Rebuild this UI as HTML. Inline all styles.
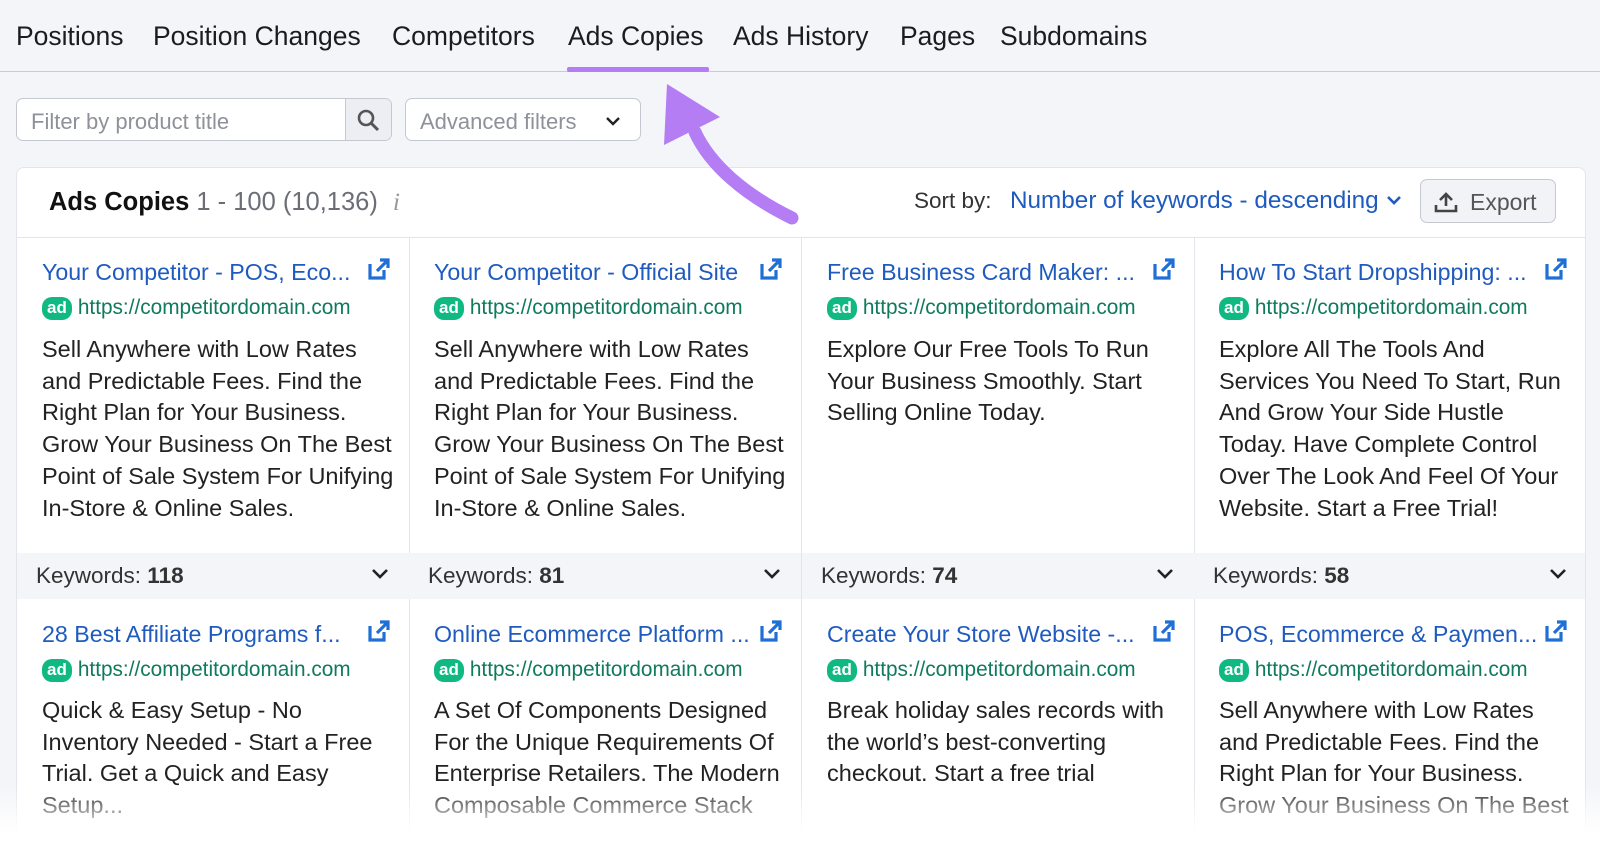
<!DOCTYPE html>
<html><head><meta charset="utf-8"><style>
*{box-sizing:border-box;margin:0;padding:0}
html,body{width:1600px;height:841px;overflow:hidden}
body{background:#f4f5f9;font-family:"Liberation Sans",sans-serif;color:#222;position:relative}
.tabs{position:absolute;top:0;left:0;right:0;height:72px;border-bottom:1px solid #c9cbd2}
.tab{position:absolute;top:21px;font-size:26.5px;color:#1c1c1e}
.ul{position:absolute;left:567px;width:142px;top:67px;height:5px;background:#b57df3;border-radius:2px}
.inp{position:absolute;left:16px;top:98px;width:376px;height:43px;border:1px solid #c5c8d0;border-radius:7px;background:#fff;overflow:hidden}
.inp span{position:absolute;left:14px;top:10px;font-size:22px;color:#8e9199}
.inp .sb{position:absolute;right:0;top:0;width:46px;height:43px;background:#eceef3;border-left:1px solid #c5c8d0}
.adv{position:absolute;left:405px;top:98px;width:236px;height:43px;border:1px solid #c5c8d0;border-radius:7px;background:#fff}
.adv span{position:absolute;left:14px;top:10px;font-size:22px;color:#8e9199}
.card{position:absolute;left:16px;top:167px;width:1570px;height:674px;background:#fff;border:1px solid #e3e5ea;border-bottom:none;border-radius:8px 8px 0 0;overflow:hidden}
.hd{position:absolute;left:0;right:0;top:0;height:70px;border-bottom:1px solid #e3e5ea}
.col{position:absolute;top:70px;width:393px;height:620px;border-right:1px solid #e3e5ea}
.t{position:absolute;left:25px;font-size:23.2px;color:#1f5bbf;white-space:nowrap}
.u{position:absolute;left:25px;font-size:20.8px;color:#0f7a5c;white-space:nowrap}
.u b{display:inline-block;background:#10b981;color:#fff;font-size:17px;border-radius:10px;padding:1px 5px 2px;margin-right:6px;font-weight:bold;vertical-align:1px}
.d{position:absolute;left:25px;width:358px;font-size:23.5px;line-height:31.7px;color:#222}
.kw{position:absolute;left:0;right:0;top:315px;height:46px;background:#f4f5f9;font-size:22.5px;color:#333}
.kw span{position:absolute;left:19px;top:10px}
.kw svg{position:absolute;right:20px;top:14px}
.fade{position:absolute;left:0;right:0;top:785px;height:56px;background:linear-gradient(rgba(255,255,255,0),#fff 85%)}
</style></head><body>
<div class="tabs">
<span class="tab" style="left:16px">Positions</span>
<span class="tab" style="left:153px">Position Changes</span>
<span class="tab" style="left:392px">Competitors</span>
<span class="tab" style="left:568px">Ads Copies</span>
<span class="tab" style="left:733px">Ads History</span>
<span class="tab" style="left:900px">Pages</span>
<span class="tab" style="left:1000px">Subdomains</span>
<div class="ul"></div>
</div>
<div class="inp"><span>Filter by product title</span><div class="sb"><svg width="46" height="43"><circle cx="20" cy="19" r="7" fill="none" stroke="#555" stroke-width="2.6"/><path d="M25 24l7 7" stroke="#555" stroke-width="3"/></svg></div></div>
<div class="adv"><span>Advanced filters</span><svg style="position:absolute;left:199px;top:15px" width="16" height="14"><path d="M2 4l6 6 6-6" fill="none" stroke="#222" stroke-width="2.4"/></svg></div>

<div class="card">
<div class="hd">
<span style="position:absolute;left:32px;top:19px;font-size:25.5px"><b style="color:#111">Ads Copies</b> <span style="color:#6c6e76">1 - 100 (10,136)</span> <i style="color:#999;font-family:'Liberation Serif',serif;margin-left:8px">i</i></span>
<span style="position:absolute;left:897px;top:20px;font-size:22.5px;color:#333">Sort by:</span>
<span style="position:absolute;left:993px;top:19px;font-size:24.3px;color:#1f5bbf">Number of keywords - descending</span>
<svg style="position:absolute;left:1369px;top:26px" width="16" height="14"><path d="M2 3l6 6 6-6" fill="none" stroke="#1f5bbf" stroke-width="2.6"/></svg>
<div style="position:absolute;left:1403px;top:11px;width:136px;height:44px;border:1px solid #c5c8d0;border-radius:7px;background:#f2f3f6">
<svg style="position:absolute;left:13px;top:11px" width="24" height="22"><path d="M12 15V3M6 9l6-6 6 6M2 14v6h20v-6" fill="none" stroke="#444" stroke-width="2.6"/></svg>
<span style="position:absolute;left:49px;top:9px;font-size:23px;color:#555">Export</span></div>
</div>

<div class="col" style="left:0">
<div class="t" style="top:21px">Your Competitor - POS, Eco...</div>
<div class="u" style="top:58px"><b>ad</b>https://competitordomain.com</div>
<div class="d" style="top:96px">Sell Anywhere with Low Rates and Predictable Fees. Find the Right Plan for Your Business. Grow Your Business On The Best Point of Sale System For Unifying In-Store &amp; Online Sales.</div>
<div class="kw"><span>Keywords: <b>118</b></span><svg width="18" height="14"><path d="M2 3l7 7 7-7" fill="none" stroke="#222" stroke-width="2.6"/></svg></div>
<div class="t" style="top:383px">28 Best Affiliate Programs f...</div>
<div class="u" style="top:420px"><b>ad</b>https://competitordomain.com</div>
<div class="d" style="top:457px">Quick &amp; Easy Setup - No Inventory Needed - Start a Free Trial. Get a Quick and Easy Setup...</div>
</div>
<div class="col" style="left:392px">
<div class="t" style="top:21px">Your Competitor - Official Site</div>
<div class="u" style="top:58px"><b>ad</b>https://competitordomain.com</div>
<div class="d" style="top:96px">Sell Anywhere with Low Rates and Predictable Fees. Find the Right Plan for Your Business. Grow Your Business On The Best Point of Sale System For Unifying In-Store &amp; Online Sales.</div>
<div class="kw"><span>Keywords: <b>81</b></span><svg width="18" height="14"><path d="M2 3l7 7 7-7" fill="none" stroke="#222" stroke-width="2.6"/></svg></div>
<div class="t" style="top:383px">Online Ecommerce Platform ...</div>
<div class="u" style="top:420px"><b>ad</b>https://competitordomain.com</div>
<div class="d" style="top:457px">A Set Of Components Designed For the Unique Requirements Of Enterprise Retailers. The Modern Composable Commerce Stack</div>
</div>
<div class="col" style="left:785px">
<div class="t" style="top:21px">Free Business Card Maker: ...</div>
<div class="u" style="top:58px"><b>ad</b>https://competitordomain.com</div>
<div class="d" style="top:96px">Explore Our Free Tools To Run Your Business Smoothly. Start Selling Online Today.</div>
<div class="kw"><span>Keywords: <b>74</b></span><svg width="18" height="14"><path d="M2 3l7 7 7-7" fill="none" stroke="#222" stroke-width="2.6"/></svg></div>
<div class="t" style="top:383px">Create Your Store Website -...</div>
<div class="u" style="top:420px"><b>ad</b>https://competitordomain.com</div>
<div class="d" style="top:457px">Break holiday sales records with the world’s best-converting checkout. Start a free trial</div>
</div>
<div class="col" style="left:1177px;border-right:none">
<div class="t" style="top:21px">How To Start Dropshipping: ...</div>
<div class="u" style="top:58px"><b>ad</b>https://competitordomain.com</div>
<div class="d" style="top:96px">Explore All The Tools And Services You Need To Start, Run And Grow Your Side Hustle Today. Have Complete Control Over The Look And Feel Of Your Website. Start a Free Trial!</div>
<div class="kw"><span>Keywords: <b>58</b></span><svg width="18" height="14"><path d="M2 3l7 7 7-7" fill="none" stroke="#222" stroke-width="2.6"/></svg></div>
<div class="t" style="top:383px">POS, Ecommerce &amp; Paymen...</div>
<div class="u" style="top:420px"><b>ad</b>https://competitordomain.com</div>
<div class="d" style="top:457px">Sell Anywhere with Low Rates and Predictable Fees. Find the Right Plan for Your Business. Grow Your Business On The Best</div>
</div>
</div>

<svg style="position:absolute;left:0;top:0" width="1600" height="841">
<defs><g id="e"><path d="M2 6v14h14V12" fill="none" stroke="#1f6fd6" stroke-width="3.2"/><path d="M9 13L20 2M12 2h8v8" fill="none" stroke="#1f6fd6" stroke-width="3.2"/></g></defs>
<use href="#e" x="368" y="258"/><use href="#e" x="760" y="258"/><use href="#e" x="1153" y="258"/><use href="#e" x="1545" y="258"/>
<use href="#e" x="368" y="620"/><use href="#e" x="760" y="620"/><use href="#e" x="1153" y="620"/><use href="#e" x="1545" y="620"/>
<path d="M792 218C745 195 710 165 695 132" fill="none" stroke="#b57df3" stroke-width="13" stroke-linecap="round"/>
<path d="M667 84L720 117L664 145Z" fill="#b57df3"/>
</svg>
<div class="fade"></div>
</body></html>
